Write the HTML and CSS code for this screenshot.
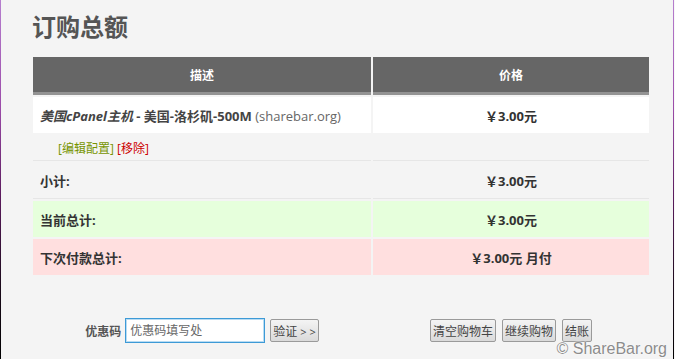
FILE: index.html
```html
<!DOCTYPE html>
<html lang="zh-CN">
<head>
  <meta charset="UTF-8">
  <title>订购总额</title>
  <link rel="stylesheet" href="styles.css">
</head>
<body>
  <div class="page">
    <h1>订购总额</h1>

    <table class="cart">
      <thead>
        <tr>
          <th class="col-desc">描述</th>
          <th class="col-price">价格</th>
        </tr>
      </thead>
      <tbody>
        <!-- product -->
        <tr class="row-product">
          <td><strong><em>美国cPanel主机</em> - 美国-洛杉矶-500M</strong> <span class="domain">(sharebar.org)</span></td>
          <td class="price">￥3.00元</td>
        </tr>
        <tr class="row-actions">
          <td><a href="#" class="textgreen">[编辑配置]</a> <a href="#" class="textred">[移除]</a></td>
          <td></td>
        </tr>

        <!-- totals -->
        <tr class="row-sub">
          <td class="label">小计:</td>
          <td class="price">￥3.00元</td>
        </tr>
        <tr class="row-total">
          <td class="label">当前总计:</td>
          <td class="price">￥3.00元</td>
        </tr>
        <tr class="row-recurring">
          <td class="label">下次付款总计:</td>
          <td class="price">￥3.00元 月付</td>
        </tr>
      </tbody>
    </table>

    <div class="cart-actions">
      <form class="promo">
        <label for="promocode">优惠码</label>
        <input type="text" id="promocode" placeholder="优惠码填写处">
        <button type="button">验证 <span class="arrows">&gt; &gt;</span></button>
      </form>
      <div class="buttons">
        <button type="button">清空购物车</button>
        <button type="button">继续购物</button>
        <button type="button">结账</button>
      </div>
    </div>

    <div class="watermark">© ShareBar.org</div>
  </div>
</body>
</html>
```

FILE: styles.css
```css
body {
  margin: 0;
  padding: 0;
  background: #f8f8f8;
  font-family: "Open Sans", "Noto Sans CJK SC", sans-serif;
  font-size: 13px;
  color: #333;
}
.page {
  position: relative;
  box-sizing: border-box;
  width: 674px;
  height: 359px;
  padding: 10px 0 0 30px;
  background: #f4f4f4;
  border-left: 1px solid #000;
  border-image: linear-gradient(#b67fcf, #9b4ba9 30%, #5a1a5c 55%, #1a0a1a 80%, #000) 1;
  border-right: 1px solid #c2c2c2;
}
h1 {
  margin: 0 0 13px 1px;
  font-size: 24px;
  line-height: 34px;
  font-weight: bold;
  color: #555;
}
.cart {
  width: 620px;
  border-collapse: separate;
  border-spacing: 2px;
  margin-top: -2px;
}
.cart th {
  height: 35px;
  padding: 0;
  background: #666;
  border-bottom: 3px solid #939393;
  color: #fff;
  font-size: 12px;
  font-weight: bold;
}
.cart .col-desc {
  width: 338px;
}
.cart td {
  padding: 0 7px;
  height: 36px;
  color: #333;
}
.row-product td {
  background: #fff;
}
.row-product strong {
  color: #444;
}
.domain {
  color: #666;
}
.row-actions td {
  height: 25px;
  padding-left: 25px;
  border-bottom: 1px solid #e6e6e6;
  font-size: 12px;
}
.row-sub td {
  height: 35px;
  border-bottom: 1px solid #e6e6e6;
}
.row-total td {
  background: #e6ffdc;
}
.row-recurring td {
  background: #ffdfdf;
}
.cart .label {
  font-weight: bold;
}
.cart .price {
  text-align: center;
  font-weight: bold;
}
.textgreen {
  color: #779500;
  text-decoration: none;
}
.textred {
  color: #cc0000;
  text-decoration: none;
}
.cart-actions {
  display: grid;
  grid-template-columns: 338px 276px;
  column-gap: 2px;
  margin: 41px 0 0 2px;
  align-items: center;
}
.promo {
  display: flex;
  justify-content: center;
  align-items: center;
}
.promo label {
  font-size: 12px;
  font-weight: bold;
  color: #555;
  margin-right: 4px;
}
.promo input {
  box-sizing: border-box;
  width: 140px;
  height: 25px;
  padding: 0 4px;
  border: 1px solid #3d9ad6;
  box-shadow: inset 0 0 0 1px #b9dcf3;
  font-family: inherit;
  font-size: 12px;
  margin-right: 5px;
}
.promo input::placeholder {
  color: #666;
}
.arrows {
  font-size: 11px;
}
.buttons {
  display: flex;
  justify-content: center;
  gap: 6px;
}
button {
  box-sizing: border-box;
  height: 23px;
  padding: 0 2px;
  background: linear-gradient(#f4f4f4, #dadada);
  border: 1px solid #9a9a9a;
  border-radius: 2px;
  font-family: inherit;
  font-size: 12px;
  color: #444;
}
.watermark {
  position: absolute;
  right: 6px;
  bottom: 1px;
  font-family: "Liberation Sans", sans-serif;
  font-size: 16px;
  color: #8c8c8c;
  text-shadow: 0 0 2px #fff, 0 0 1px #fff;
}
```
